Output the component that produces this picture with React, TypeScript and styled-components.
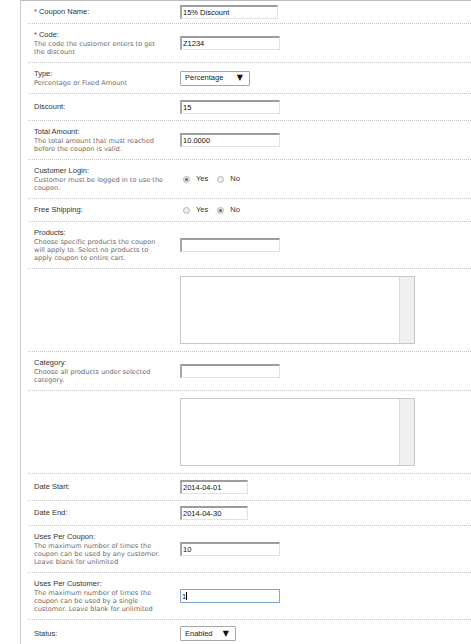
import styled, { createGlobalStyle } from "styled-components";

const GlobalStyle = createGlobalStyle`
  body {
    margin: 0;
    background: #fff;
    font-family: "Liberation Sans", Arial, sans-serif;
  }
`;

const Panel = styled.div`
  margin-left: 20px;
  border-left: 1px solid #cfcfcf;
  border-top: 1px solid #bdbdbd;
  padding-left: 7px;
`;

const FormRow = styled.div<{ $pad?: number }>`
  display: grid;
  grid-template-columns: 152px 1fr;
  align-items: center;
  padding: ${(p) => p.$pad ?? 6}px 0;
  border-bottom: 1px dotted #c4c4c4;
`;

const LabelCell = styled.div`
  padding-left: 6px;
`;

const FieldCell = styled.div`
  display: flex;
  align-items: center;
  line-height: 0;
`;

const LabelText = styled.div`
  font-size: 7.5px;
  line-height: 10px;
  color: #333;
`;

const Required = styled.span`
  color: #e00;
  margin-right: 2px;
`;

const Help = styled.div`
  font-family: "DejaVu Sans", Verdana, sans-serif;
  font-size: 6.6px;
  line-height: 8px;
  color: #6a6a6a;
  white-space: nowrap;
`;

const FieldWrap = styled.div`
  position: relative;
`;

const TextInput = styled.input<{ $w?: number; $focused?: boolean }>`
  display: block;
  box-sizing: border-box;
  width: ${(p) => p.$w ?? 100}px;
  height: 14px;
  margin: 0;
  padding: 0 1px;
  font-family: "Liberation Sans", Arial, sans-serif;
  font-size: 7.5px;
  line-height: 10px;
  color: #111;
  background: #fff;
  outline: none;
  border-style: solid;
  border-width: ${(p) => (p.$focused ? "1px" : "2px 1px 1px 2px")};
  border-color: ${(p) =>
    p.$focused ? "#7ea4d9" : "#9c9c9c #e2e2e2 #e2e2e2 #a8a8a8"};
`;

const Caret = styled.span`
  position: absolute;
  left: 6px;
  top: 3px;
  width: 1px;
  height: 8px;
  background: #000;
`;

const FakeSelect = styled.div<{ $w: number }>`
  box-sizing: border-box;
  width: ${(p) => p.$w}px;
  height: 15px;
  display: flex;
  align-items: center;
  justify-content: space-between;
  padding: 0 6px 0 4px;
  border: 1px solid #a6a6a6;
  border-radius: 1px;
  background: #fff;
  font-size: 7.5px;
  line-height: 10px;
  color: #222;
`;

const Arrow = styled.span`
  font-family: "DejaVu Sans", sans-serif;
  font-size: 8px;
  color: #111;
`;

const RadioGroup = styled.div`
  display: flex;
  align-items: center;
  height: 10px;
  padding-left: 3px;
  font-size: 7.5px;
  line-height: 10px;
  color: #333;
`;

const RadioOption = styled.label`
  display: flex;
  align-items: center;
  gap: 6px;
  margin-right: 9px;
`;

const RadioDot = styled.span<{ $checked?: boolean }>`
  box-sizing: border-box;
  width: 7px;
  height: 7px;
  border-radius: 50%;
  border: 1px solid #b4b4b4;
  background: #eee;
  display: flex;
  align-items: center;
  justify-content: center;

  &::after {
    content: "";
    width: 3px;
    height: 3px;
    border-radius: 50%;
    background: ${(p) => (p.$checked ? "#666" : "transparent")};
  }
`;

const ListBox = styled.div`
  box-sizing: border-box;
  width: 235px;
  height: 68px;
  border: 1px solid #c8c8c8;
  background: #fff;
  display: flex;
  justify-content: flex-end;
`;

const ScrollTrack = styled.div`
  width: 14px;
  background: #f0f0f0;
  border-left: 1px solid #dadada;
`;

type Field =
  | { kind: "text"; value: string; w?: number; focused?: boolean }
  | { kind: "select"; value: string; w: number }
  | { kind: "radio"; yes: boolean }
  | { kind: "list" };

type Row = {
  label?: string;
  required?: boolean;
  help?: string[];
  field: Field;
  pad?: number;
};

const rows: Row[] = [
  { label: "Coupon Name:", required: true, field: { kind: "text", value: "15% Discount", w: 98 }, pad: 4 },
  {
    label: "Code:",
    required: true,
    help: ["The code the customer enters to get", "the discount"],
    field: { kind: "text", value: "Z1234" },
  },
  { label: "Type:", help: ["Percentage or Fixed Amount"], field: { kind: "select", value: "Percentage", w: 70 } },
  { label: "Discount:", field: { kind: "text", value: "15" } },
  {
    label: "Total Amount:",
    help: ["The total amount that must reached", "before the coupon is valid."],
    field: { kind: "text", value: "10.0000" },
  },
  {
    label: "Customer Login:",
    help: ["Customer must be logged in to use the", "coupon."],
    field: { kind: "radio", yes: true },
  },
  { label: "Free Shipping:", field: { kind: "radio", yes: false } },
  {
    label: "Products:",
    help: ["Choose specific products the coupon", "will apply to. Select no products to", "apply coupon to entire cart."],
    field: { kind: "text", value: "" },
  },
  { field: { kind: "list" }, pad: 7 },
  {
    label: "Category:",
    help: ["Choose all products under selected", "category."],
    field: { kind: "text", value: "" },
  },
  { field: { kind: "list" }, pad: 7 },
  { label: "Date Start:", field: { kind: "text", value: "2014-04-01", w: 68 } },
  { label: "Date End:", field: { kind: "text", value: "2014-04-30", w: 68 }, pad: 5 },
  {
    label: "Uses Per Coupon:",
    help: ["The maximum number of times the", "coupon can be used by any customer.", "Leave blank for unlimited"],
    field: { kind: "text", value: "10" },
  },
  {
    label: "Uses Per Customer:",
    help: ["The maximum number of times the", "coupon can be used by a single", "customer. Leave blank for unlimited"],
    field: { kind: "text", value: "1", focused: true },
  },
  { label: "Status:", field: { kind: "select", value: "Enabled", w: 56 } },
];

const FieldView = ({ field }: { field: Field }) => {
  switch (field.kind) {
    case "text":
      return (
        <FieldWrap>
          <TextInput type="text" readOnly defaultValue={field.value} $w={field.w} $focused={field.focused} />
          {field.focused && <Caret />}
        </FieldWrap>
      );
    case "select":
      return (
        <FakeSelect $w={field.w}>
          {field.value}
          <Arrow>▼</Arrow>
        </FakeSelect>
      );
    case "radio":
      return (
        <RadioGroup>
          <RadioOption>
            <RadioDot $checked={field.yes} />
            Yes
          </RadioOption>
          <RadioOption>
            <RadioDot $checked={!field.yes} />
            No
          </RadioOption>
        </RadioGroup>
      );
    case "list":
      return (
        <ListBox>
          <ScrollTrack />
        </ListBox>
      );
  }
};

const App = () => {
  return (
    <>
      <GlobalStyle />
      <Panel>
        {rows.map((row, i) => (
          <FormRow key={i} $pad={row.pad}>
            <LabelCell>
              {row.label && (
                <LabelText>
                  {row.required && <Required>*</Required>}
                  {row.label}
                </LabelText>
              )}
              {row.help?.map((line) => (
                <Help key={line}>{line}</Help>
              ))}
            </LabelCell>
            <FieldCell>
              <FieldView field={row.field} />
            </FieldCell>
          </FormRow>
        ))}
      </Panel>
    </>
  );
};

export default App;
